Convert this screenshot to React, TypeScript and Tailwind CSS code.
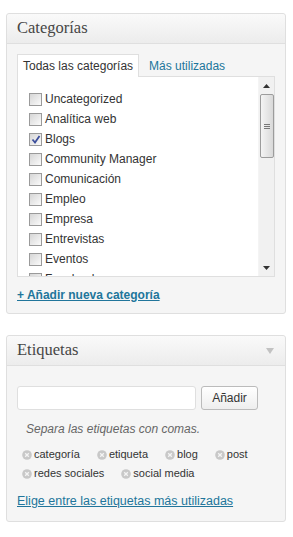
const categories = [
  { name: "Uncategorized", checked: false },
  { name: "Analítica web", checked: false },
  { name: "Blogs", checked: true },
  { name: "Community Manager", checked: false },
  { name: "Comunicación", checked: false },
  { name: "Empleo", checked: false },
  { name: "Empresa", checked: false },
  { name: "Entrevistas", checked: false },
  { name: "Eventos", checked: false },
  { name: "Facebook", checked: false },
];

const tags = ["categoría", "etiqueta", "blog", "post", "redes sociales", "social media"];

function Checkbox({ checked }: { checked: boolean }) {
  return (
    <span className="mr-[3px] flex h-[13px] w-[13px] shrink-0 items-center justify-center border border-[#9a9a9a] bg-gradient-to-br from-[#d6d6d6] to-[#fbfbfb]">
      {checked && (
        <svg width="10" height="9" viewBox="0 0 10 9">
          <path d="M1.5 4.5 L4 7.5 L8.5 1" fill="none" stroke="#3d4f9c" strokeWidth="1.8" />
        </svg>
      )}
    </span>
  );
}

function TagRemove() {
  return (
    <svg width="10" height="10" viewBox="0 0 10 10" className="mr-[2px] shrink-0">
      <circle cx="5" cy="5" r="4.8" fill="#c8c8c8" />
      <path d="M3.2 3.2 L6.8 6.8 M6.8 3.2 L3.2 6.8" stroke="#f4f4f4" strokeWidth="1.3" />
    </svg>
  );
}

function Scrollbar() {
  return (
    <div className="flex w-[16px] shrink-0 flex-col items-center border-l border-[#f4f4f4] bg-[#f1f1f1]">
      <div className="flex h-[17px] items-center justify-center">
        <svg width="7" height="4" viewBox="0 0 7 4">
          <path d="M0 4 L3.5 0 L7 4 Z" fill="#333" />
        </svg>
      </div>
      <div className="flex h-[64px] w-[14px] items-center justify-center rounded-[2px] border border-[#9c9c9c] bg-gradient-to-r from-[#f4f4f4] to-[#d9d9d9]">
        <div className="flex flex-col gap-[1px]">
          <span className="h-px w-[6px] bg-[#777]" />
          <span className="h-px w-[6px] bg-[#777]" />
          <span className="h-px w-[6px] bg-[#777]" />
        </div>
      </div>
      <div className="flex-1" />
      <div className="flex h-[17px] items-center justify-center">
        <svg width="7" height="4" viewBox="0 0 7 4">
          <path d="M0 0 L3.5 4 L7 0 Z" fill="#333" />
        </svg>
      </div>
    </div>
  );
}

function PanelHeader({ title, toggle }: { title: string; toggle?: boolean }) {
  return (
    <div className="flex h-[30px] items-center justify-between rounded-t-[3px] border-b border-[#dfdfdf] bg-gradient-to-b from-[#fafafa] to-[#ececec] px-[10px]">
      <h3 className="font-['Liberation_Serif',Georgia,serif] text-[16.5px] text-[#464646]">{title}</h3>
      {toggle && (
        <svg width="8" height="6" viewBox="0 0 8 6" className="mr-[1px]">
          <path d="M0 0 L8 0 L4 6 Z" fill="#c2c2c2" />
        </svg>
      )}
    </div>
  );
}

export default function App() {
  return (
    <div className="min-h-[537px] bg-white pl-[6px] pt-[13px] font-['Liberation_Sans',Arial,sans-serif] text-[#333]">
      <div className="w-[280px] rounded-[3px] border border-[#dfdfdf] bg-[#f5f5f5]">
        <PanelHeader title="Categorías" />
        <div className="px-[10px] pb-[10px] pt-[10px]">
          <div className="relative z-10 -mb-px flex h-[23px] items-stretch text-[12px]">
            <div className="flex items-center border border-b-0 border-[#dfdfdf] bg-white px-[5px]">
              Todas las categorías
            </div>
            <div className="flex items-center pl-[10px] text-[#21759b]">Más utilizadas</div>
          </div>
          <div className="flex h-[201px] overflow-hidden border border-[#dfdfdf] bg-white">
            <ul className="flex-1 pl-[11px] pt-[12px] text-[12px]">
              {categories.map((c) => (
                <li key={c.name} className="flex h-[20px] items-center">
                  <Checkbox checked={c.checked} />
                  <span>{c.name}</span>
                </li>
              ))}
            </ul>
            <Scrollbar />
          </div>
          <a className="mt-[10px] block text-[12px] font-bold leading-[16px] text-[#21759b] underline">
            + Añadir nueva categoría
          </a>
        </div>
      </div>

      <div className="mt-[21px] w-[280px] rounded-[3px] border border-[#dfdfdf] bg-[#f5f5f5]">
        <PanelHeader title="Etiquetas" toggle />
        <div className="px-[10px] pb-[12px] pt-[20px]">
          <div className="flex h-[24px]">
            <input className="h-[24px] w-[179px] rounded-[3px] border border-[#dfdfdf] bg-white px-[4px] text-[12px] outline-none" />
            <button className="ml-[5px] h-[24px] w-[57px] rounded-[3px] border border-[#bbb] bg-gradient-to-b from-white to-[#eeeeee] text-[12px] text-[#333]">
              Añadir
            </button>
          </div>
          <p className="mt-[11px] pl-[9px] text-[12px] italic leading-[16px] text-[#666]">
            Separa las etiquetas con comas.
          </p>
          <div className="mt-[8px] flex w-[250px] flex-wrap gap-x-[17px] pl-[5px] text-[11px]">
            {tags.map((t) => (
              <span key={t} className="flex h-[19px] items-center">
                <TagRemove />
                {t}
              </span>
            ))}
          </div>
          <a className="mt-[10px] block text-[12.5px] leading-[16px] text-[#21759b] underline">
            Elige entre las etiquetas más utilizadas
          </a>
        </div>
      </div>
    </div>
  );
}
